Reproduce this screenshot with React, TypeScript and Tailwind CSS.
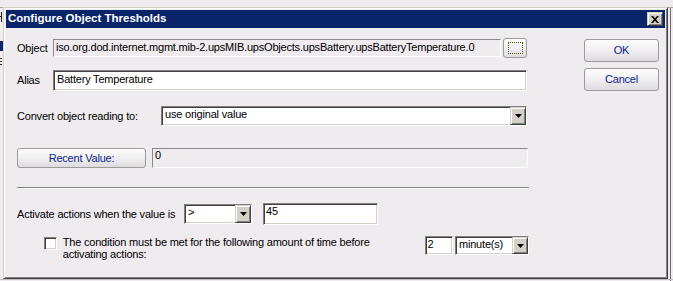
import React from "react";

const font = "font-['Liberation_Sans',Arial,sans-serif]";

const sunken =
  "border border-t-[#808080] border-l-[#808080] border-b-white border-r-white shadow-[inset_1px_1px_0_#404040,inset_-1px_-1px_0_#d4d0c8]";
const flat = "border border-t-[#8a8a8a] border-l-[#8a8a8a] border-b-white border-r-white";
const raised =
  "border border-t-[#d4d0c8] border-l-[#d4d0c8] border-b-[#404040] border-r-[#404040] shadow-[inset_1px_1px_0_#ffffff,inset_-1px_-1px_0_#808080] bg-[#d4d0c8]";
const xpButton =
  "rounded-[3px] border border-[#9b9b9b] bg-gradient-to-b from-[#fdfdfd] via-[#f1eff1] to-[#dedbde] text-[#0b1f8c]";

const Arrow = () => (
  <div className={`${raised} flex h-full w-[16px] items-center justify-center`}>
    <svg width="7" height="4" viewBox="0 0 7 4">
      <path d="M0 0h7L3.5 4z" fill="#000" />
    </svg>
  </div>
);

const Combo = ({ value, className }: { value: string; className: string }) => (
  <div className={`${sunken} flex items-stretch bg-white ${className}`}>
    <span className="flex-1 pl-[3px] leading-[15px]">{value}</span>
    <Arrow />
  </div>
);

export default function App() {
  return (
    <div className={`${font} relative h-[281px] w-[673px] overflow-hidden bg-[#efebef] text-[11px] text-black`}>
      {/* windows behind the dialog (only slivers show) */}
      <div className="absolute left-0 top-[7px] h-px w-full bg-[#a8a8a8]" />
      <div className="absolute left-[1px] top-[12px] h-[10px] w-px bg-[#222]" />
      <div className="absolute left-0 top-[16px] h-px w-[2px] bg-[#222]" />
      <div className="absolute left-0 top-[41px] h-[10px] w-[3px] bg-[#0a246a]" />
      <div className="absolute left-0 top-[58px] h-px w-[2px] bg-[#333]" />
      <div className="absolute left-0 top-[61px] h-px w-[2px] bg-[#333]" />
      <div className="absolute left-0 top-[64px] h-px w-[2px] bg-[#333]" />
      <div className="absolute left-[670px] top-[8px] h-full w-px bg-[#6b6b6b]" />
      <div className="absolute left-0 top-[279px] h-px w-full bg-[#bdbdbd]" />

      {/* dialog window */}
      <div className="absolute left-[3px] top-[7px] flex h-[272px] w-[665px] flex-col border border-t-[#d4d0c8] border-l-[#d4d0c8] border-b-[#404040] border-r-[#404040] bg-[#efebef] p-[2px] shadow-[inset_1px_1px_0_#ffffff,inset_-1px_-1px_0_#808080]">
        <div className="flex h-[18px] items-center bg-[#0a246a] pl-[2px] pr-[2px]">
          <span className="flex-1 text-[11.5px] font-bold text-white">Configure Object Thresholds</span>
          <div className={`${raised} flex h-[14px] w-[16px] items-center justify-center`}>
            <svg width="8" height="7" viewBox="0 0 8 7">
              <path d="M0 0h2l2 2.2L6 0h2L5 3.5 8 7H6L4 4.8 2 7H0l3-3.5z" fill="#000" />
            </svg>
          </div>
        </div>

        <div className="flex flex-1 pl-[11px] tracking-[-0.2px]">
          {/* left column */}
          <div className="flex w-[512px] flex-col">
            <div className="mt-[10px] flex h-[20px] items-center">
              <span className="w-[36px]">Object</span>
              <div className={`${flat} h-[18px] w-[448px] overflow-hidden whitespace-nowrap pl-[2px] leading-[14px]`}>
                iso.org.dod.internet.mgmt.mib-2.upsMIB.upsObjects.upsBattery.upsBatteryTemperature.0
              </div>
              <div className={`${xpButton} ml-[2px] flex h-[20px] w-[24px] items-center justify-center`}>
                <div className="h-[12px] w-[15px] border border-dotted border-[#5a5000]" />
              </div>
            </div>

            <div className="mt-[12px] flex h-[21px] items-center">
              <span className="w-[36px]">Alias</span>
              <div className={`${sunken} h-[21px] w-[474px] bg-white pl-[3px] leading-[17px]`}>Battery Temperature</div>
            </div>

            <div className="mt-[15px] flex h-[20px] items-center">
              <span className="w-[144px]">Convert object reading to:</span>
              <Combo value="use original value" className="h-[20px] w-[366px]" />
            </div>

            <div className="mt-[22px] flex h-[20px] items-center">
              <div className={`${xpButton} flex h-[20px] w-[129px] items-center justify-center`}>Recent Value:</div>
              <div className={`${flat} ml-[6px] h-[20px] w-[376px] pl-[2px] leading-[13px]`}>0</div>
            </div>

            <div className="mt-[19px] h-[2px] w-[512px] border-t border-t-[#808080] border-b border-b-white" />

            <div className="mt-[14px] flex h-[22px] items-center">
              <span className="w-[167px]">Activate actions when the value is</span>
              <Combo value=">" className="h-[20px] w-[68px]" />
              <div className={`${sunken} ml-[11px] h-[22px] w-[115px] bg-white pl-[2px] leading-[15px]`}>45</div>
            </div>

            <div className="mt-[11px] flex items-start">
              <div className={`${sunken} ml-[27px] mt-[1px] h-[13px] w-[13px] bg-white`} />
              <span className="ml-[6px] w-[330px] leading-[12px]">
                The condition must be met for the following amount of time before activating actions:
              </span>
              <div className={`${sunken} ml-[39px] h-[19px] w-[29px] bg-white pl-[2px] leading-[14px]`}>2</div>
              <Combo value="minute(s)" className="ml-[2px] h-[19px] w-[74px] shrink-0" />
            </div>
          </div>

          {/* right column */}
          <div className="ml-[55px] flex flex-col">
            <div className={`${xpButton} mt-[11px] flex h-[23px] w-[75px] items-center justify-center`}>OK</div>
            <div className={`${xpButton} mt-[6px] flex h-[23px] w-[75px] items-center justify-center`}>Cancel</div>
          </div>
        </div>
      </div>
    </div>
  );
}
